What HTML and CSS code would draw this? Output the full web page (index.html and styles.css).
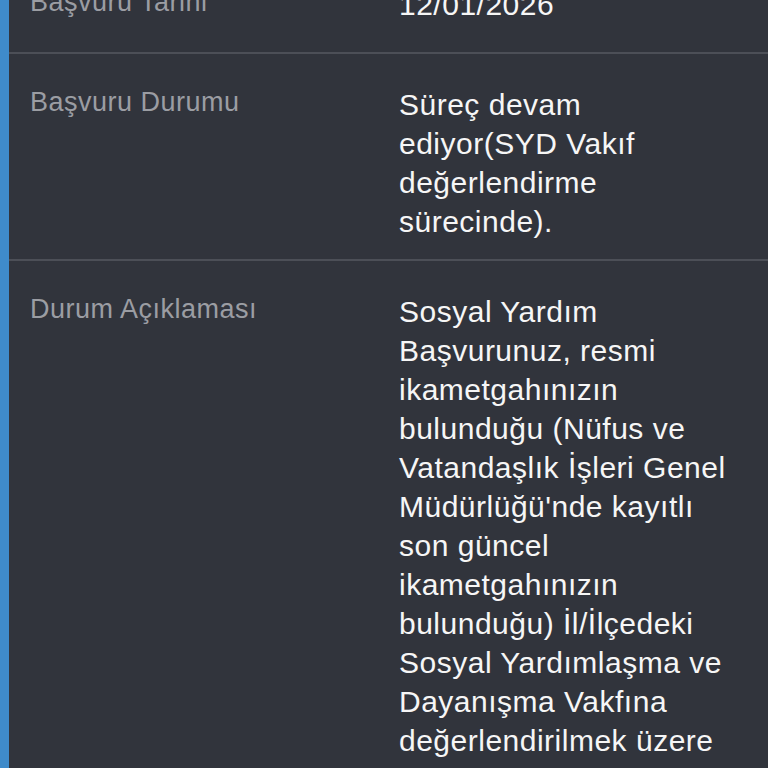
FILE: index.html
```html
<!DOCTYPE html>
<html lang="tr">
<head>
<meta charset="utf-8">
<title>Başvuru Detayı</title>
<link rel="stylesheet" href="styles.css">
</head>
<body>
<div class="panel">
  <div class="list">
    <div class="row">
      <div class="label">Başvuru Tarihi</div>
      <div class="value">12/01/2026</div>
    </div>
    <div class="row">
      <div class="label">Başvuru Durumu</div>
      <div class="value">Süreç devam ediyor(SYD Vakıf değerlendirme sürecinde).</div>
    </div>
    <div class="row">
      <div class="label">Durum Açıklaması</div>
      <div class="value">Sosyal Yardım Başvurunuz, resmi ikametgahınızın bulunduğu (Nüfus ve Vatandaşlık İşleri Genel Müdürlüğü'nde kayıtlı son güncel ikametgahınızın bulunduğu) İl/İlçedeki Sosyal Yardımlaşma ve Dayanışma Vakfına değerlendirilmek üzere iletilmiştir.</div>
    </div>
  </div>
</div>
</body>
</html>
```

FILE: styles.css
```css
html, body {
  margin: 0;
  padding: 0;
  background: #31343c;
  height: 100%;
  overflow: hidden;
}

.panel {
  min-height: 100%;
  border-left: 9px solid #3f8bca;
  background: #31343c;
  font-family: "Liberation Sans", Arial, sans-serif;
}

.list {
  margin-top: -46px;
}

.row {
  display: grid;
  grid-template-columns: 369px 339px;
  padding: 31px 0 18px 21px;
  border-bottom: 2px solid #4c4f57;
}

.row:first-child {
  padding-bottom: 28px;
}

.label {
  color: #9b9da3;
  font-size: 27px;
  line-height: 35px;
  letter-spacing: 0.5px;
}

.value {
  color: #f6f6f6;
  font-size: 30px;
  line-height: 39px;
  letter-spacing: 0.5px;
}
```
